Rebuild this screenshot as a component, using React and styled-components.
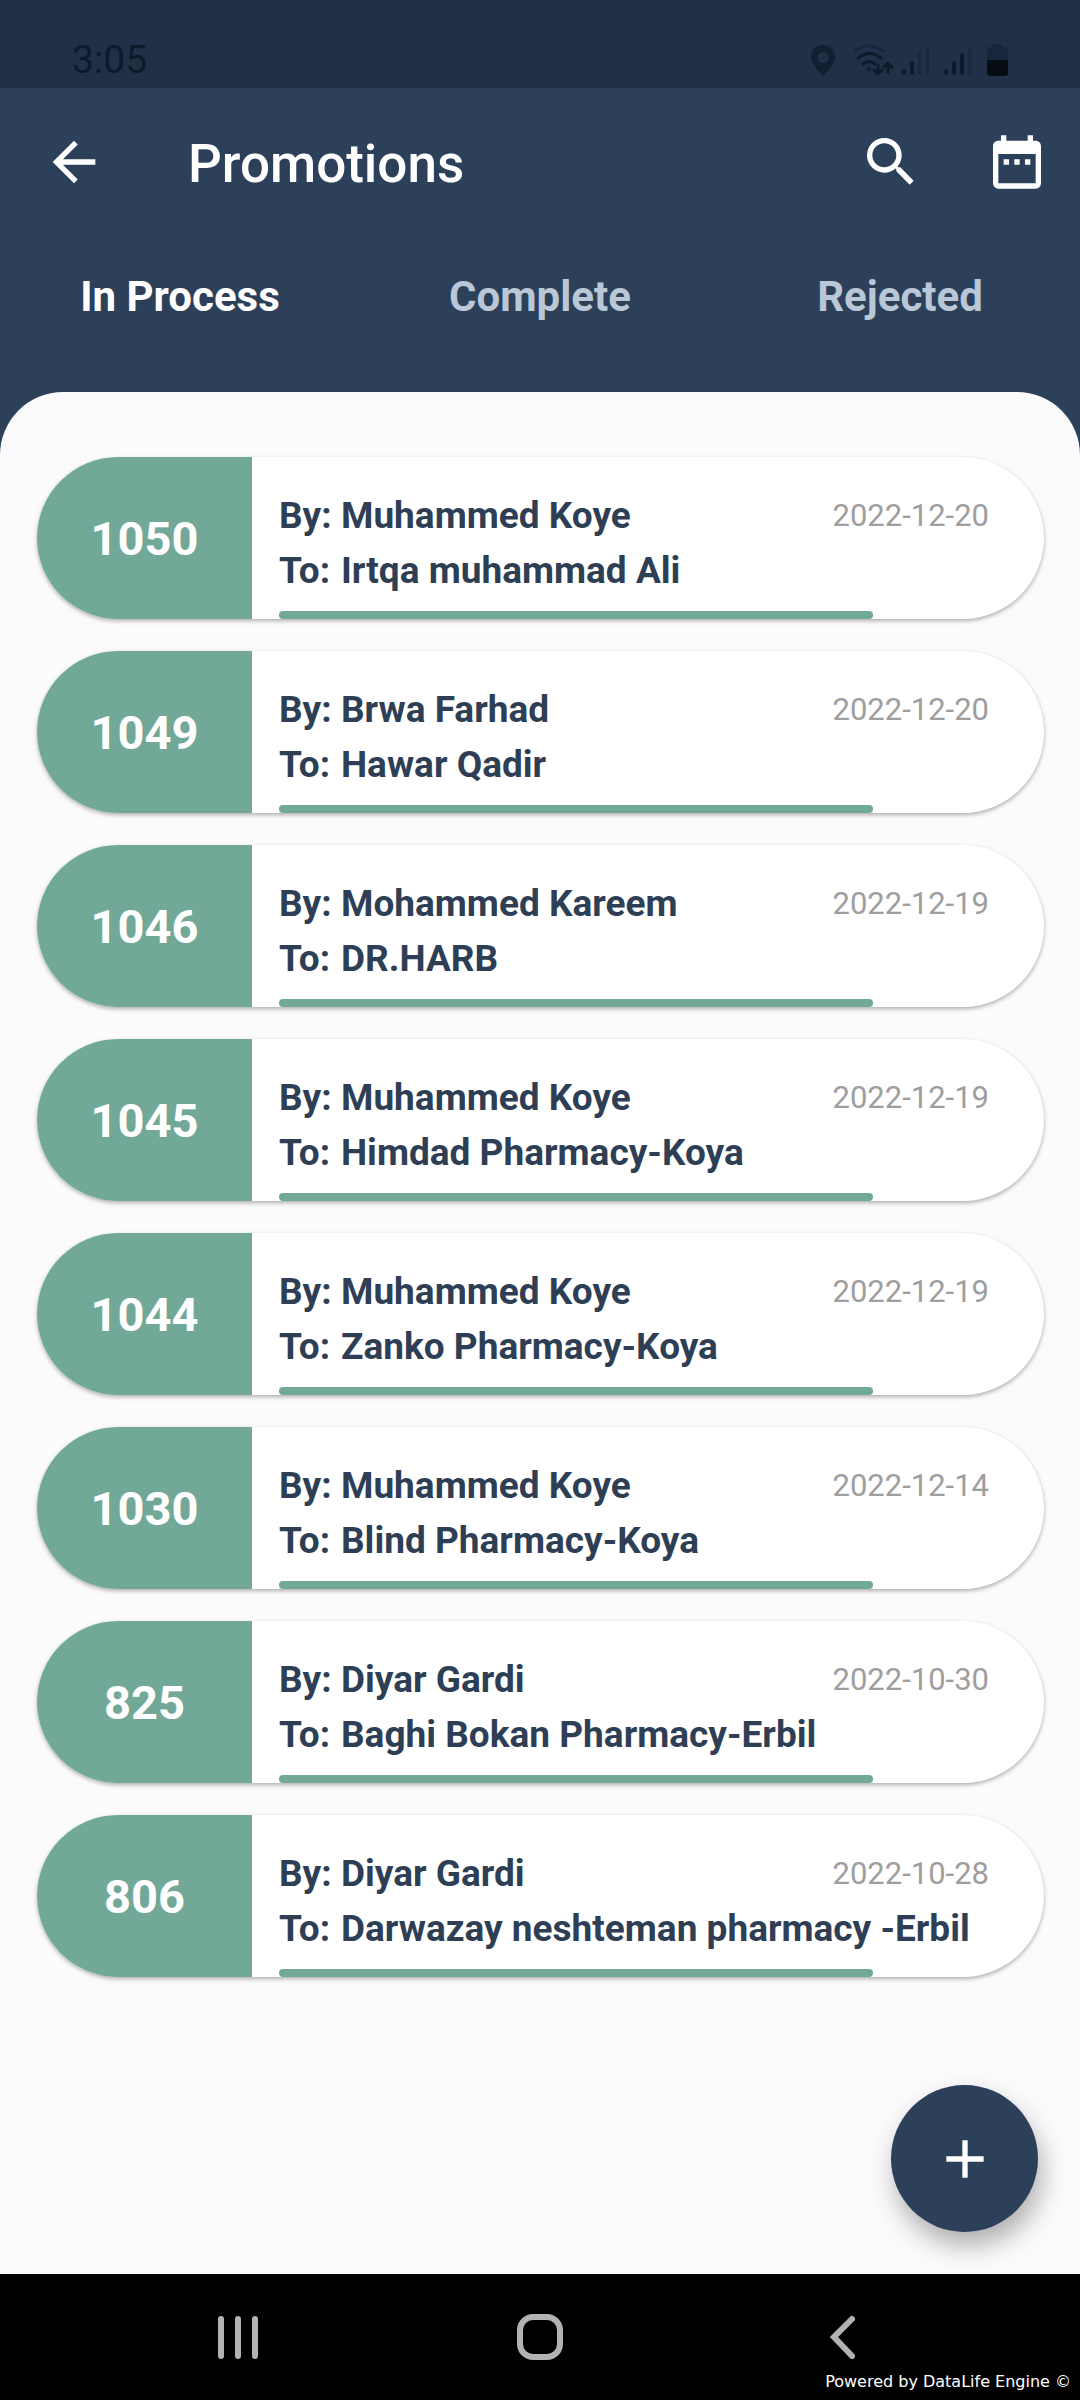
import { useState } from 'react';
import styled, { createGlobalStyle } from 'styled-components';
import {
  MdAdd, MdArrowBack, MdDateRange, MdSearch,
} from 'react-icons/md';

const colors = {
  statusBar: '#213046',
  statusIcon: '#0c1a2a',
  primary: '#2d405a',
  accent: '#71a898',
  surface: '#fbfafc',
  text: '#2e3f55',
  mutedText: '#9e9e9e',
  inactiveTab: '#b9c7d6',
  navIcon: '#b3b1b4',
};

const GlobalStyle = createGlobalStyle`
  * {
    box-sizing: border-box;
  }

  body {
    margin: 0;
    font-family: Roboto, "Liberation Sans", sans-serif;
  }

  button {
    padding: 0;
    border: 0;
    background: none;
    color: inherit;
    font-family: inherit;
    cursor: pointer;
  }
`;

const Page = styled.div`
  min-height: 100vh;
  display: flex;
  flex-direction: column;
  background-color: ${colors.primary};
`;

const StatusBar = styled.div`
  height: 88px;
  padding: 32px 68px 0 72px;
  display: flex;
  justify-content: space-between;
  align-items: center;
  background-color: ${colors.statusBar};
  color: ${colors.statusIcon};
`;

const Time = styled.span`
  font-size: 39px;
  line-height: 48px;
`;

const AppBar = styled.header`
  height: 148px;
  padding: 0 31px 0 42px;
  display: flex;
  align-items: center;
  color: #fff;
`;

const Title = styled.h1`
  flex: 1;
  margin: 0;
  padding: 3px 0 0 82px;
  font-size: 53px;
  font-weight: 500;
  line-height: 64px;
`;

const IconButton = styled.button`
  width: 64px;
  height: 64px;
  font-size: 64px;

  svg {
    display: block;
  }
`;

const Actions = styled.div`
  display: flex;
  gap: 62px;
`;

const Tabs = styled.nav`
  padding-bottom: 36px;
  display: grid;
  grid-template-columns: repeat(3, 1fr);
`;

const Tab = styled.button`
  height: 120px;
  color: ${({ $active }) => ($active ? '#fff' : colors.inactiveTab)};
  font-size: 42px;
  font-weight: 700;
`;

const Panel = styled.main`
  position: relative;
  flex: 1;
  padding: 65px 36px 64px 37px;
  border-radius: 63px 63px 0 0;
  background-color: ${colors.surface};
`;

const List = styled.ul`
  margin: 0;
  padding: 0;
  display: flex;
  flex-direction: column;
  gap: 32px;
  list-style: none;
`;

const Card = styled.li`
  min-height: 162px;
  display: flex;
  border-radius: 81px;
  background-color: #fff;
  box-shadow: 0 2px 4px rgba(0, 0, 0, .3);
  overflow: hidden;
`;

const Badge = styled.div`
  flex: 0 0 215px;
  display: flex;
  align-items: center;
  justify-content: center;
  background-color: ${colors.accent};
  color: #fff;
  font-size: 47px;
  font-weight: 700;
`;

const Details = styled.div`
  flex: 1;
  padding: 31px 0 0 27px;
  display: flex;
  flex-direction: column;
  justify-content: space-between;
`;

const Line = styled.p`
  margin: 0;
  padding-right: 55px;
  display: flex;
  color: ${colors.text};
  font-size: 37px;
  font-weight: 700;
  line-height: 55px;
`;

const Label = styled.span`
  flex: 0 0 62px;
`;

const Created = styled.time`
  margin-left: auto;
  color: ${colors.mutedText};
  font-size: 31px;
  font-weight: 400;
`;

const Progress = styled.div`
  width: 594px;
  max-width: 80%;
  height: 8px;
  border-radius: 4px;
  background-color: ${colors.accent};
`;

const AddButton = styled.button`
  position: absolute;
  right: 42px;
  bottom: 42px;
  width: 147px;
  height: 147px;
  display: flex;
  align-items: center;
  justify-content: center;
  border-radius: 50%;
  background-color: ${colors.primary};
  box-shadow: 4px 14px 26px rgba(0, 0, 0, .3);
  color: #fff;
  font-size: 64px;
`;

const SystemNav = styled.footer`
  position: relative;
  height: 126px;
  padding: 0 56px;
  display: grid;
  grid-template-columns: 363px 1fr 363px;
  background-color: #000;
  color: ${colors.navIcon};
`;

const NavButton = styled.button`
  display: flex;
  align-items: center;
  justify-content: center;
`;

const Credit = styled.small`
  position: absolute;
  right: 9px;
  bottom: 8px;
  color: #fff;
  font-family: "DejaVu Sans", sans-serif;
  font-size: 16px;
  line-height: 20px;
`;

const tabs = ['In Process', 'Complete', 'Rejected'];

const promotions = [
  {
    id: 1050, by: 'Muhammed Koye', to: 'Irtqa muhammad Ali', date: '2022-12-20',
  },
  {
    id: 1049, by: 'Brwa Farhad', to: 'Hawar Qadir', date: '2022-12-20',
  },
  {
    id: 1046, by: 'Mohammed Kareem', to: 'DR.HARB', date: '2022-12-19',
  },
  {
    id: 1045, by: 'Muhammed Koye', to: 'Himdad Pharmacy-Koya', date: '2022-12-19',
  },
  {
    id: 1044, by: 'Muhammed Koye', to: 'Zanko Pharmacy-Koya', date: '2022-12-19',
  },
  {
    id: 1030, by: 'Muhammed Koye', to: 'Blind Pharmacy-Koya', date: '2022-12-14',
  },
  {
    id: 825, by: 'Diyar Gardi', to: 'Baghi Bokan Pharmacy-Erbil', date: '2022-10-30',
  },
  {
    id: 806, by: 'Diyar Gardi', to: 'Darwazay neshteman pharmacy -Erbil', date: '2022-10-28',
  },
];

function StatusIcons() {
  return (
    <svg width="202" height="34" viewBox="0 0 202 34" fill="currentColor" aria-hidden="true">
      <path
        fillRule="evenodd"
        opacity=".75"
        d="M13 2a12 12 0 0 0-12 12c0 7 6 12 12 19c6-7 12-12 12-19a12 12 0 0 0-12-12zm0 7a5 5 0 1 1 0 11a5 5 0 0 1 0-11z"
      />
      <g fill="none" stroke="currentColor" strokeWidth="3" strokeLinecap="round">
        <path d="M45 8q14-10 28 0" opacity=".4" />
        <path d="M48 15q12-9 23 0" />
        <path d="M53 21q6-5 12 0" />
        <path d="M68 22v9m-4-4l4 4l4-4M78 29v-9m-4 4l4-4l4 4" />
      </g>
      <circle cx="59" cy="26" r="2" />
      <rect x="92" y="26" width="4" height="6" rx="2" />
      <rect x="100" y="18" width="4" height="14" rx="2" />
      <rect x="108" y="10" width="3" height="22" rx="1" opacity=".35" />
      <rect x="116" y="3" width="3" height="29" rx="1" opacity=".35" />
      <rect x="134" y="26" width="4" height="6" rx="2" />
      <rect x="142" y="18" width="4" height="14" rx="2" />
      <rect x="150" y="10" width="4" height="22" rx="2" />
      <rect x="158" y="4" width="4" height="28" rx="1" opacity=".2" />
      <path d="M183 1h9v3h4q2 0 2 2v11h-21v-11q0-2 2-2h4z" opacity=".4" />
      <path d="M177 17h21v13q0 3-3 3h-15q-3 0-3-3z" fill="#070c12" />
    </svg>
  );
}

function Promotion({ promotion }) {
  return (
    <Card>
      <Badge>{promotion.id}</Badge>
      <Details>
        <div>
          <Line>
            <Label>By:</Label>
            <span>{promotion.by}</span>
            <Created dateTime={promotion.date}>{promotion.date}</Created>
          </Line>
          <Line>
            <Label>To:</Label>
            <span>{promotion.to}</span>
          </Line>
        </div>
        <Progress />
      </Details>
    </Card>
  );
}

export default function App() {
  const [activeTab, setActiveTab] = useState(tabs[0]);

  return (
    <Page>
      <GlobalStyle />
      <StatusBar>
        <Time>3:05</Time>
        <StatusIcons />
      </StatusBar>
      <AppBar>
        <IconButton type="button" aria-label="Back"><MdArrowBack /></IconButton>
        <Title>Promotions</Title>
        <Actions>
          <IconButton type="button" aria-label="Search"><MdSearch /></IconButton>
          <IconButton type="button" aria-label="Pick dates"><MdDateRange /></IconButton>
        </Actions>
      </AppBar>
      <Tabs>
        {tabs.map((tab) => (
          <Tab
            key={tab}
            type="button"
            $active={tab === activeTab}
            onClick={() => setActiveTab(tab)}
          >
            {tab}
          </Tab>
        ))}
      </Tabs>
      <Panel>
        <List>
          {promotions.map((promotion) => (
            <Promotion key={promotion.id} promotion={promotion} />
          ))}
        </List>
        <AddButton type="button" aria-label="Add promotion"><MdAdd /></AddButton>
      </Panel>
      <SystemNav>
        <NavButton type="button" aria-label="Recent apps">
          <svg width="42" height="44" viewBox="0 0 42 44" stroke="currentColor" strokeWidth="6" strokeLinecap="round">
            <path d="M4 4v37M21 4v37M38 4v37" />
          </svg>
        </NavButton>
        <NavButton type="button" aria-label="Home">
          <svg width="48" height="48" viewBox="0 0 48 48" fill="none" stroke="currentColor" strokeWidth="6">
            <rect x="4" y="4" width="40" height="40" rx="13" />
          </svg>
        </NavButton>
        <NavButton type="button" aria-label="Go back">
          <svg width="28" height="44" viewBox="0 0 28 44" fill="none" stroke="currentColor" strokeWidth="6" strokeLinecap="round">
            <path d="M23 4L5 22L23 41" />
          </svg>
        </NavButton>
        <Credit>Powered by DataLife Engine ©</Credit>
      </SystemNav>
    </Page>
  );
}
